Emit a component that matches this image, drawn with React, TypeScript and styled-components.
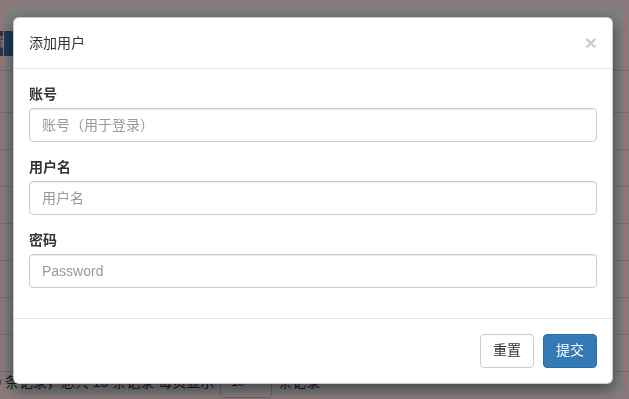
import * as React from "react";
import styled, { createGlobalStyle } from "styled-components";

const GlobalStyle = createGlobalStyle`
  html, body {
    margin: 0;
    padding: 0;
    width: 629px;
    height: 399px;
    overflow: hidden;
    background: #fff;
  }
  body {
    font-family: "Liberation Sans", "Noto Sans CJK SC", sans-serif;
    font-size: 14px;
    line-height: 1.428571;
    color: #333;
  }
  * {
    box-sizing: border-box;
  }
`;

// ---- page behind the modal ----

const Page = styled.div`
  height: 399px;
  overflow: hidden;
  display: flex;
  flex-direction: column;
`;

const Toolbar = styled.div`
  display: flex;
  padding-top: 31px;
  height: 70px;
`;

const EditButton = styled.button`
  margin-left: -30px;
  width: 44px;
  height: 25px;
  border: 1px solid #2e6da4;
  border-radius: 3px;
  background: #337ab7;
  color: #fff;
  font: inherit;
  font-size: 12px;
  padding: 0 6px;
`;

const Table = styled.div`
  display: flex;
  flex-direction: column;
  border-top: 1px solid #ddd;
`;

const Row = styled.div<{ head?: boolean }>`
  height: ${({ head }) => (head ? "42px" : "37px")};
  border-bottom: 1px solid #ddd;
  padding: 8px;
`;

const Pagination = styled.div`
  display: flex;
  align-items: center;
  gap: 6px;
  margin-left: -104px;
  margin-top: -4px;
  white-space: nowrap;
`;

const PageSize = styled.div`
  width: 52px;
  height: 30px;
  border: 1px solid #ccc;
  border-radius: 3px;
  display: flex;
  align-items: center;
  padding-left: 10px;
  font-size: 12px;
`;

// ---- overlays ----

const Backdrop = styled.div`
  position: fixed;
  inset: 0;
  background: rgba(0, 0, 0, 0.5);
`;

const Frame = styled.div`
  position: fixed;
  top: 3px;
  left: 3px;
  width: 622px;
  height: 394px;
  border: 1px solid #c85a5a;
  pointer-events: none;
`;

const ModalLayer = styled.div`
  position: fixed;
  inset: 0;
  overflow: hidden;
`;

const Dialog = styled.div`
  width: 600px;
  margin: 17px 0 0 13px;
  background: #fff;
  border: 1px solid rgba(0, 0, 0, 0.2);
  border-radius: 6px;
  box-shadow: 0 5px 15px rgba(0, 0, 0, 0.5);
`;

const Header = styled.div`
  display: flex;
  align-items: center;
  justify-content: space-between;
  height: 51px;
  padding: 0 15px;
  border-bottom: 1px solid #e5e5e5;
`;

const Title = styled.h4`
  margin: 0;
  font-size: 14px;
  font-weight: 400;
  line-height: 20px;
`;

const Close = styled.button`
  border: 0;
  background: none;
  padding: 0;
  margin-top: -2px;
  font-family: "Liberation Sans", sans-serif;
  font-size: 21px;
  font-weight: 700;
  line-height: 1;
  color: #000;
  opacity: 0.2;
  text-shadow: 0 1px 0 #fff;
`;

const Body = styled.div`
  padding: 15px;
`;

const Group = styled.div`
  display: flex;
  flex-direction: column;
  margin-bottom: 15px;
`;

const Label = styled.label`
  display: block;
  height: 20px;
  font-weight: 700;
  margin-bottom: 4px;
  line-height: 20px;
`;

const Input = styled.input`
  height: 34px;
  padding: 6px 12px;
  font: inherit;
  font-size: 14px;
  color: #555;
  border: 1px solid #ccc;
  border-radius: 4px;
  box-shadow: inset 0 1px 1px rgba(0, 0, 0, 0.075);
  outline: none;

  &::placeholder {
    color: #999;
  }
`;

const Footer = styled.div`
  display: flex;
  justify-content: flex-end;
  gap: 9px;
  padding: 15px;
  border-top: 1px solid #e5e5e5;
`;

const Button = styled.button<{ primary?: boolean }>`
  height: 34px;
  padding: 0 12px;
  font: inherit;
  font-size: 14px;
  border-radius: 4px;
  border: 1px solid ${({ primary }) => (primary ? "#2e6da4" : "#ccc")};
  background: ${({ primary }) => (primary ? "#337ab7" : "#fff")};
  color: ${({ primary }) => (primary ? "#fff" : "#333")};
`;

const fields = [
  { label: "账号", placeholder: "账号（用于登录）", type: "text" },
  { label: "用户名", placeholder: "用户名", type: "text" },
  { label: "密码", placeholder: "Password", type: "password" },
];

export default function App() {
  return (
    <>
      <GlobalStyle />
      <Page>
        <Toolbar>
          <EditButton>编辑</EditButton>
        </Toolbar>
        <Table>
          <Row head />
          {[0, 1, 2, 3, 4, 5, 6].map((i) => (
            <Row key={i} />
          ))}
        </Table>
        <Pagination>
          <span>显示第 1 到第 10 条记录，总共 15 条记录 每页显示</span>
          <PageSize>10</PageSize>
          <span>条记录</span>
        </Pagination>
      </Page>
      <Backdrop />
      <ModalLayer>
        <Dialog>
          <Header>
            <Title>添加用户</Title>
            <Close>×</Close>
          </Header>
          <Body>
            {fields.map((f) => (
              <Group key={f.label}>
                <Label>{f.label}</Label>
                <Input type={f.type} placeholder={f.placeholder} />
              </Group>
            ))}
          </Body>
          <Footer>
            <Button>重置</Button>
            <Button primary>提交</Button>
          </Footer>
        </Dialog>
      </ModalLayer>
      <Frame />
    </>
  );
}
